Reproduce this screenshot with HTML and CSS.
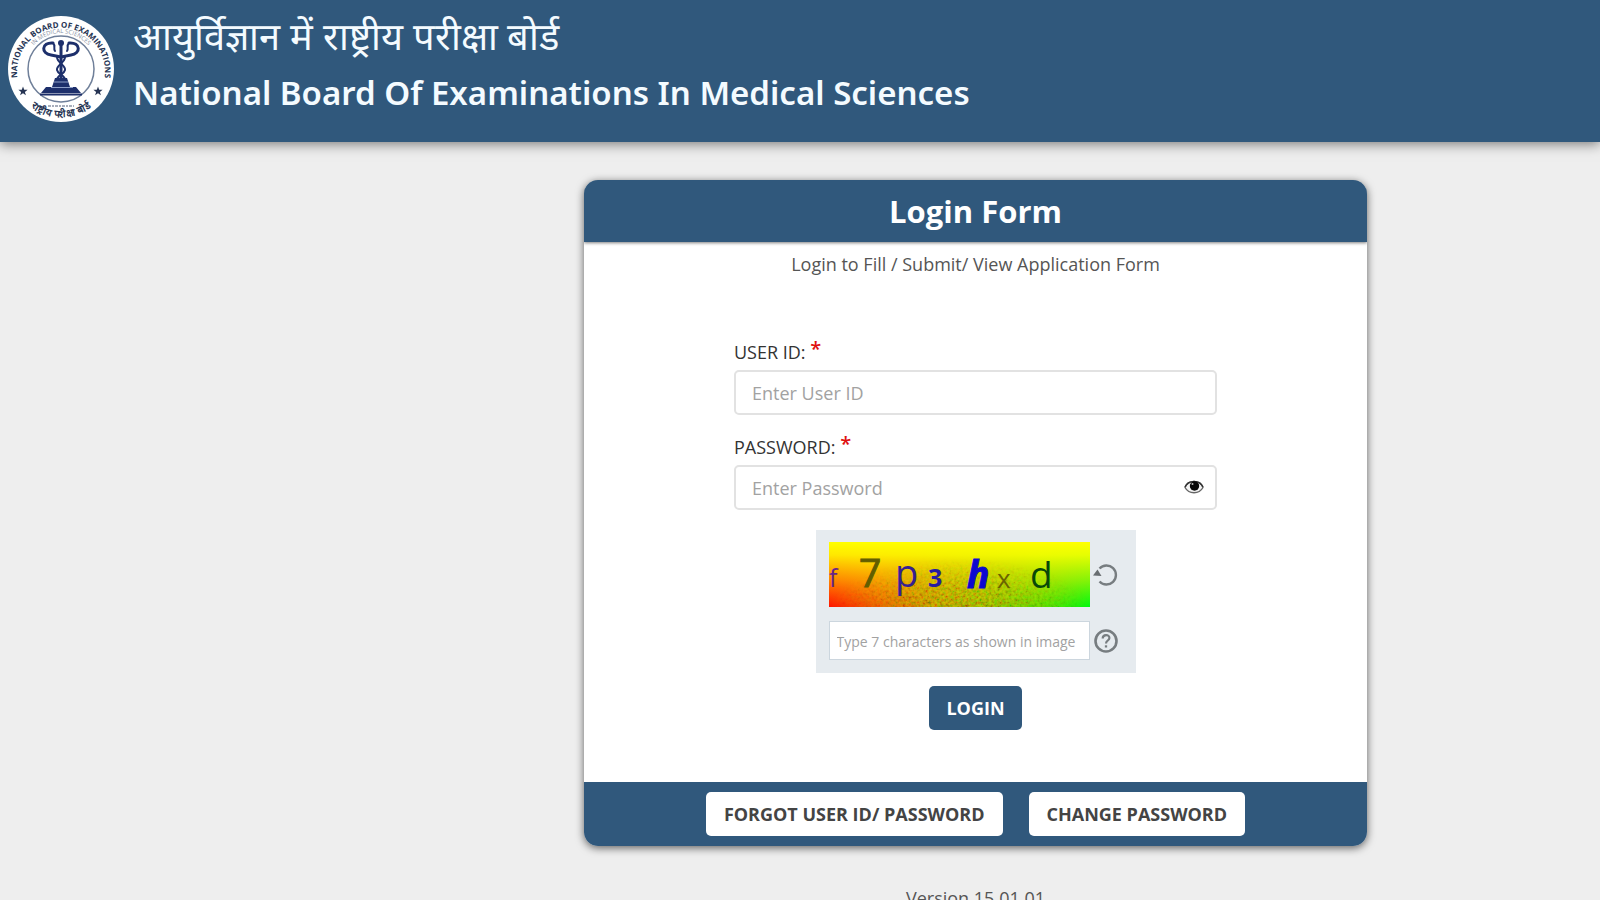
FILE: index.html
```html
<!DOCTYPE html>
<html lang="en">
<head>
<meta charset="utf-8">
<meta name="viewport" content="width=device-width, initial-scale=1">
<title>Login Form</title>
<link rel="stylesheet" href="styles.css">
</head>
<body>
<header class="site-header">
  <svg class="seal" viewBox="0 0 108 108" role="img" aria-label="NBEMS seal">
    <defs>
      <path id="arc-outer" d="M11 66A44 44 0 1 1 97 66"/>
      <path id="arc-inner" d="M18 54A36 36 0 0 1 90 54"/>
      <path id="arc-low" d="M10 75A49 49 0 0 0 98 75"/>
    </defs>
    <circle cx="54" cy="54" r="53" fill="#fff"/>
    <circle cx="54" cy="54" r="33" fill="none" stroke="#6f7f99" stroke-width="1.500"/>
    <text class="seal-outer"><textPath href="#arc-outer" startOffset="50%">NATIONAL BOARD OF EXAMINATIONS</textPath></text>
    <text class="seal-inner"><textPath href="#arc-inner" startOffset="50%">IN MEDICAL SCIENCES</textPath></text>
    <text class="seal-low"><textPath href="#arc-low" startOffset="50%">राष्ट्रीय परीक्षा बोर्ड</textPath></text>
    <g fill="#263453">
      <path id="star" d="M16 71.500l1.200 3.200 3.400.1-2.700 2.100 1 3.300-2.900-1.900-2.900 1.900 1-3.300-2.700-2.100 3.400-.1z"/>
      <use href="#star" x="75"/>
    </g>
    <g fill="none" stroke="#1d2f6b" stroke-linecap="round">
      <path d="M46 28C34 27 34 39 44 40L54 42L64 40C74 39 74 27 62 28" stroke-width="3"/>
      <path d="M46 28C49 31 46 33 48 36M62 28C59 31 62 33 60 36" stroke-width="2"/>
      <path d="M50 42C50 48 59 50 58 55C57 60 49 60 50 66M58 42C58 48 49 50 50 55C51 60 59 60 58 66" stroke-width="2"/>
      <path d="M54 29V66" stroke-width="3"/>
    </g>
    <circle cx="54" cy="28" r="3" fill="#1d2f6b"/>
    <path d="M48 63H60L63 72H69L74 78H34L39 72H45Z" fill="#1d2f6b"/>
    <path d="M44 72.500H66M47 67H61" stroke="#8fa0c8"/>
    <path d="M33 79.500H75" stroke="#1d2f6b" stroke-width="2"/>
    <path d="M41 91H67" stroke="#a8aebb" stroke-width="2" stroke-dasharray="3 1 2 1"/>
  </svg>
  <div class="site-names">
    <p class="name-hi" lang="hi">आयुर्विज्ञान में राष्ट्रीय परीक्षा बोर्ड</p>
    <h1 class="name-en">National Board Of Examinations In Medical Sciences</h1>
  </div>
</header>
<main class="page">
  <div class="column">
    <form class="card" action="#">
      <h2 class="card-title">Login Form</h2>
      <div class="card-body">
        <p class="intro">Login to Fill / Submit/ View Application Form</p>
        <div class="fields">
          <div class="field">
            <label for="user">USER ID: <span class="required">*</span></label>
            <input class="text-input" id="user" type="text" placeholder="Enter User ID">
          </div>
          <div class="field">
            <label for="password">PASSWORD: <span class="required">*</span></label>
            <div class="password-box">
              <input class="text-input" id="password" type="password" placeholder="Enter Password">
              <button class="icon-button eye" type="button" aria-label="Show password">
                <svg width="20" height="14" viewBox="0 0 20 14"><path d="M1 7.500C4-.500 16-.500 19 7.500C15 14.500 5 14.500 1 7.500Z" fill="#f4f4f4" stroke="#666" stroke-width="1.400"/><path d="M1 7C4-.500 16-.500 19 7" fill="none" stroke="#333" stroke-width="1.500"/><circle cx="10.500" cy="6" r="4.700" fill="#080808"/><circle cx="8.500" cy="4" r="1" fill="#bbb"/></svg>
              </button>
            </div>
          </div>
        </div>
        <div class="captcha">
          <svg class="captcha-image" viewBox="0 0 261 65" role="img" aria-label="Captcha image">
            <defs>
              <linearGradient id="base" x1="0" x2="1"><stop offset="0" stop-color="#ff1400"/><stop offset=".2" stop-color="#f04a00"/><stop offset=".55" stop-color="#8a9a00"/><stop offset=".8" stop-color="#4ed800"/><stop offset="1" stop-color="#00fa10"/></linearGradient>
              <linearGradient id="sun" x1="0" x2="0" y1="0" y2="1"><stop offset="0" stop-color="#ff0"/><stop offset=".2" stop-color="#ff0" stop-opacity=".9"/><stop offset=".6" stop-color="#ffee00" stop-opacity=".5"/><stop offset="1" stop-color="#ffe500" stop-opacity="0"/></linearGradient>
              <radialGradient id="fade" cx=".5" cy="1" r=".5" gradientTransform="translate(.5 1) scale(1 1.500) translate(-.5 -1)"><stop offset=".2" stop-color="#fff"/><stop offset="1" stop-color="#000"/></radialGradient>
              <mask id="low"><rect width="261" height="65" fill="url(#fade)"/></mask>
              <filter id="grain" x="0" y="0" width="100%" height="100%"><feTurbulence type="fractalNoise" baseFrequency=".35" numOctaves="2" seed="4"/><feColorMatrix values="2 0 0 0 -.4  0 2 0 0 -.4  0 0 0 0 0  0 0 0 0 .45"/></filter>
            </defs>
            <rect width="261" height="65" fill="url(#base)"/>
            <rect width="261" height="65" fill="url(#sun)"/>
            <g mask="url(#low)"><rect width="261" height="65" filter="url(#grain)"/></g>
            <g class="captcha-text">
              <text x="0" y="45" font-size="25" fill="#67258a">f</text>
              <text x="30" y="45" font-size="39" fill="#625e00" stroke="#625e00">7</text>
              <text x="66" y="45" font-size="38" fill="#352090">p</text>
              <text x="99" y="45" font-size="25" font-weight="700" fill="#281ca0">3</text>
              <text x="138" y="46" font-size="37" font-weight="700" font-style="italic" fill="#0c08d0" stroke="#0c08d0">h</text>
              <text x="168" y="46" font-size="26" fill="#6b6400">x</text>
              <text x="201" y="46" font-size="37" fill="#084808">d</text>
            </g>
          </svg>
          <button class="icon-button" type="button" aria-label="Refresh captcha">
            <svg width="26" height="24" viewBox="0 0 26 24" fill="none"><path d="M6.500 5.500A9.500 9.500 0 1 1 6.500 18.500" stroke="#777d80" stroke-width="2.400"/><path d="M0 12.500L4.500 6.500L8.500 13Z" fill="#686d70"/></svg>
          </button>
          <input class="captcha-input" type="text" aria-label="Captcha characters" placeholder="Type 7 characters as shown in image">
          <button class="icon-button" type="button" aria-label="Captcha help">
            <svg width="26" height="26" viewBox="0 0 26 26" fill="none" stroke="#777d80"><circle cx="13" cy="13" r="10.500" stroke-width="2.600"/><path d="M9.700 10.500C9.700 6 16.400 6 16.400 10C16.400 12.500 13 12.600 13 15.500" stroke-width="2.200"/><path d="M13 17.300V19.500" stroke-width="2.300"/></svg>
          </button>
        </div>
        <button class="button primary" type="submit">LOGIN</button>
      </div>
      <div class="card-actions">
        <button class="button light" type="button">FORGOT USER ID/ PASSWORD</button>
        <button class="button light" type="button">CHANGE PASSWORD</button>
      </div>
    </form>
    <p class="version">Version 15.01.01</p>
  </div>
</main>
</body>
</html>
```
FILE: styles.css
```css
* { box-sizing: border-box; }

body {
  margin: 0;
  background: #eee;
  color: #555;
  font: 18px/24px "Open Sans", sans-serif;
}

h1, h2, p { margin: 0; }
button, input { font-family: inherit; }

.site-header {
  display: flex;
  align-items: flex-start;
  gap: 18px;
  min-height: 142px;
  padding: 11px 7px 16px;
  background: #30587c;
  color: #f4fbff;
  box-shadow: 0 2px 12px rgba(0, 0, 0, .5);
}

.seal { width: 108px; height: 108px; flex: none; margin-top: 4px; }
.seal text { text-anchor: middle; font-family: "Open Sans", sans-serif; fill: #263453; }
.seal .seal-outer { font-size: 8px; font-weight: 700; }
.seal .seal-inner { font-size: 6px; fill: #8790a2; }
.seal .seal-low { font-size: 10px; font-weight: 600; }

.name-hi { font-size: 38px; line-height: 48px; }
.name-en { margin-top: 10px; font: 600 33px/48px "Noto Sans", "Open Sans", sans-serif; }

.page {
  display: grid;
  grid-template-columns: 584fr 783fr 233fr;
  padding: 38px 0 24px;
}

.column { grid-column: 2; }

.card {
  overflow: hidden;
  border-radius: 14px;
  background: #fff;
  box-shadow: 0 2px 8px rgba(0, 0, 0, .6);
}

.card-title {
  padding: 12px;
  background: #30587c;
  color: #fff;
  font-size: 31px;
  line-height: 38px;
  text-align: center;
  box-shadow: 0 1px 3px rgba(0, 0, 0, .5);
}

.card-body {
  display: flex;
  flex-direction: column;
  align-items: center;
  padding: 10px 24px 52px;
}

.intro { color: #555; }

.fields {
  display: grid;
  gap: 20px;
  width: 100%;
  max-width: 483px;
  margin-top: 64px;
}

.field { display: grid; gap: 6px; }
.field label { color: #333; font-weight: 500; line-height: 24px; }
.required { color: #e01010; font-size: 20px; font-weight: 600; line-height: 0; vertical-align: 3px; }

.text-input {
  width: 100%;
  height: 45px;
  padding: 0 16px;
  border: 2px solid #e2e2e2;
  border-radius: 5px;
  background: #fff;
  font-size: 18px;
}

.text-input::placeholder, .captcha-input::placeholder { color: #a2a2a2; opacity: 1; }

.password-box { position: relative; }
.eye { position: absolute; top: 15px; right: 13px; }

.icon-button {
  display: grid;
  place-items: center;
  padding: 0;
  border: 0;
  background: none;
}

.captcha {
  display: grid;
  grid-template-columns: 261px 26px;
  align-items: center;
  gap: 14px 3px;
  margin-top: 20px;
  padding: 12px 17px 13px 13px;
  background: #e6ebef;
}

.captcha-image { display: block; width: 261px; height: 65px; }
.captcha-text { font-family: "Open Sans", sans-serif; }

.captcha-input {
  width: 100%;
  height: 39px;
  padding: 2px 7px 0;
  border: 1px solid #ccd6de;
  background: #fff;
  font-size: 14px;
}

.button {
  height: 44px;
  padding: 0 17px;
  border: 0;
  border-radius: 5px;
  font-size: 18px;
  font-weight: 700;
}

.primary { margin-top: 13px; background: #30587c; color: #fff; }
.light { padding: 0 18px; background: #fff; color: #444; }

.card-actions {
  display: flex;
  justify-content: center;
  gap: 26px;
  padding: 10px;
  background: #30587c;
}

.version { margin-top: 40px; text-align: center; }
```
